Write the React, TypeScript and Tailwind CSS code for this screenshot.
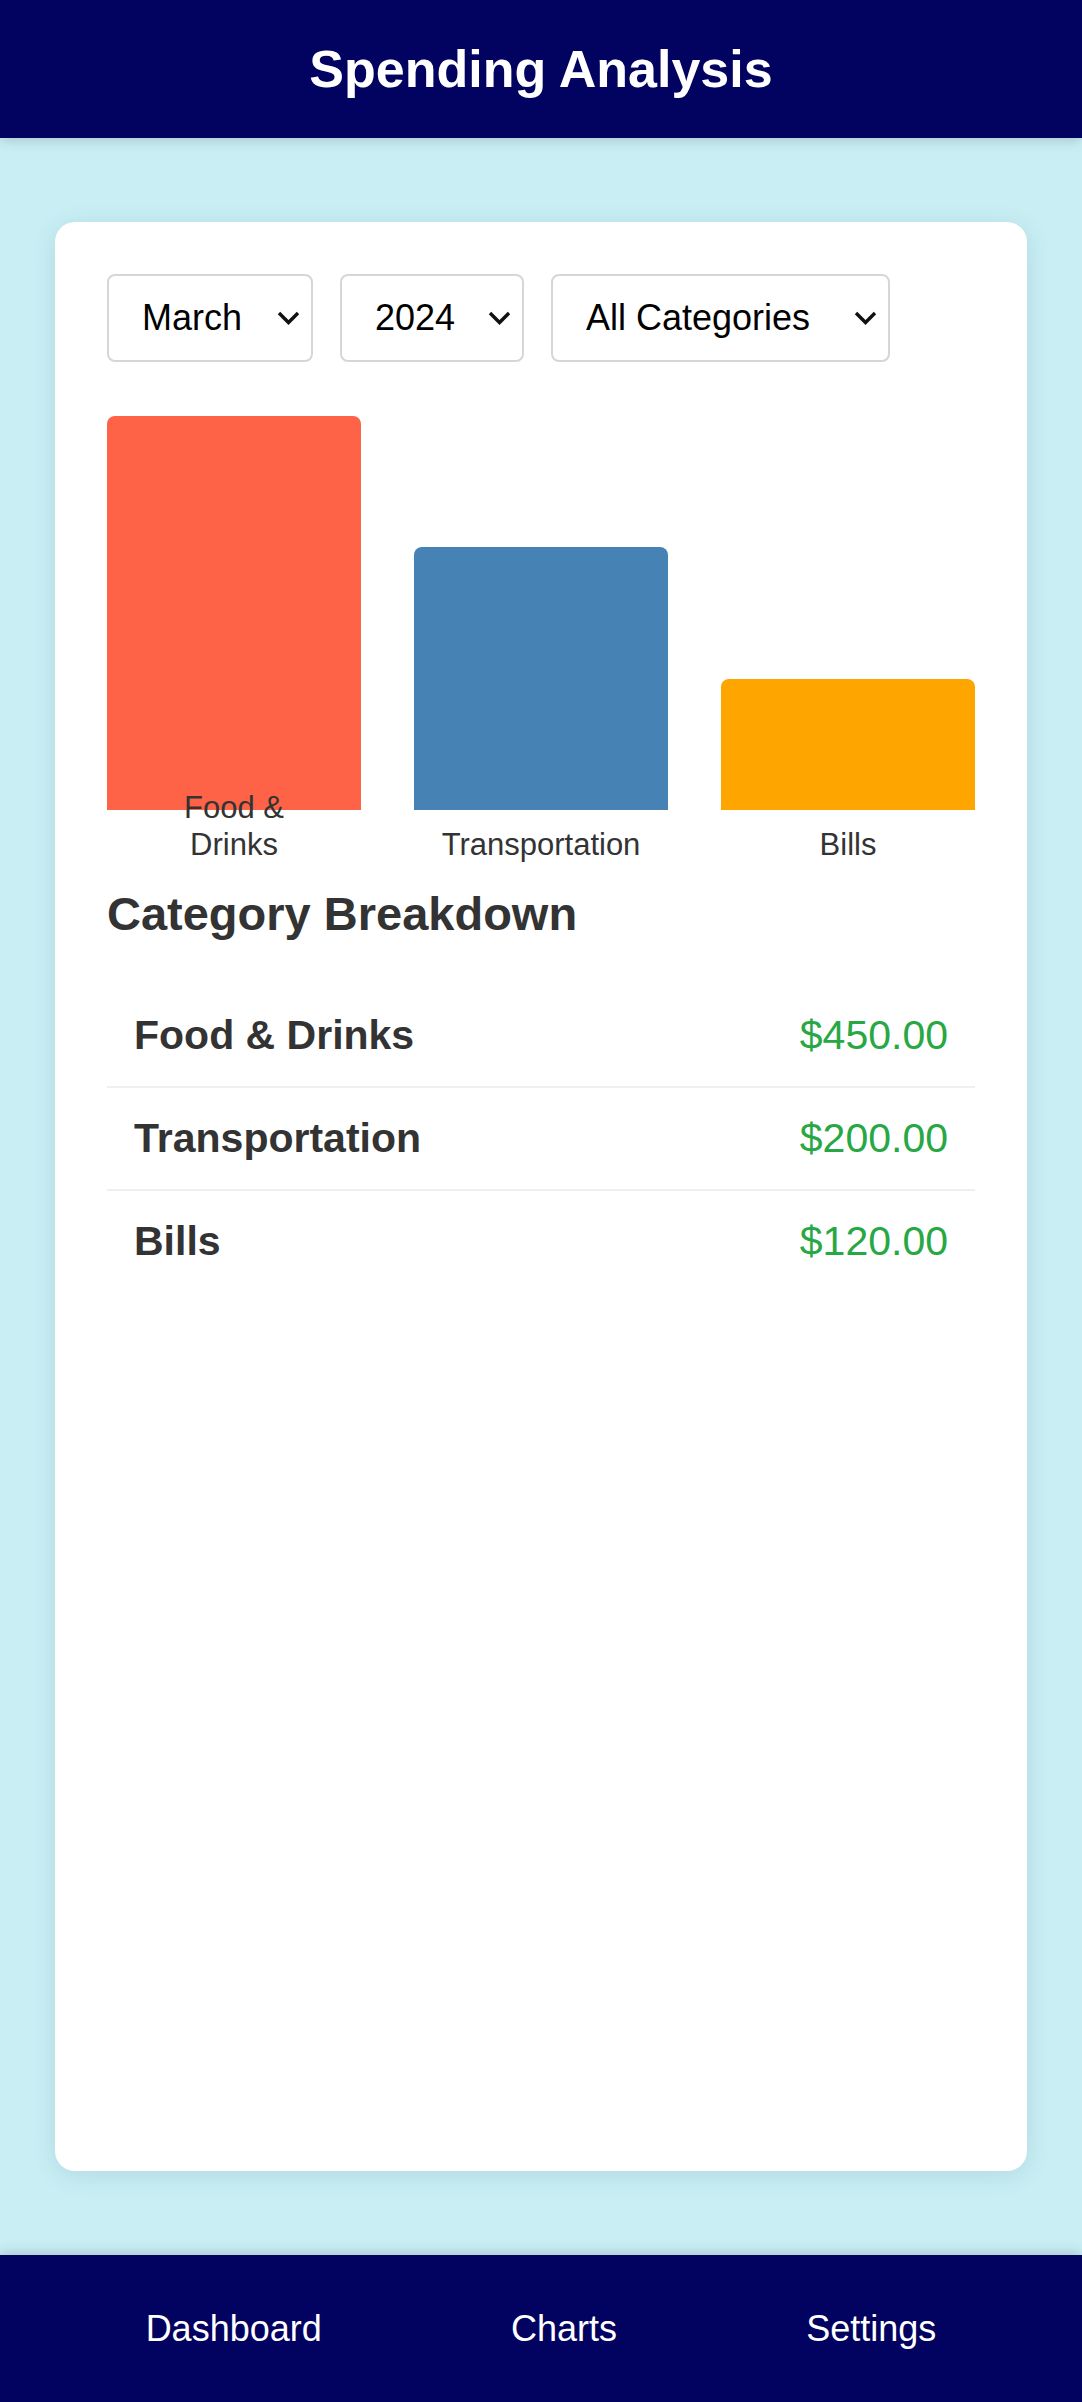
import { useState } from 'react'

const bars = [
  { name: 'Food & Drinks', color: 'bg-[#ff6347]', height: 'h-[394px]' },
  { name: 'Transportation', color: 'bg-[#4682b4]', height: 'h-[263px]' },
  { name: 'Bills', color: 'bg-[#ffa500]', height: 'h-[131px]' },
]

const breakdown = [
  { name: 'Food & Drinks', amount: 450 },
  { name: 'Transportation', amount: 200 },
  { name: 'Bills', amount: 120 },
]

function Chevron() {
  return (
    <svg
      className="pointer-events-none absolute right-[13px] top-1/2 -translate-y-1/2"
      width="23"
      height="15"
      viewBox="0 0 23 15"
      fill="none"
    >
      <path d="M2 2.5 L11.5 12 L21 2.5" stroke="#111" strokeWidth="3.4" strokeLinejoin="miter" />
    </svg>
  )
}

function Filter({
  value,
  options,
  width,
  onChange,
}: {
  value: string
  options: string[]
  width: string
  onChange: (v: string) => void
}) {
  return (
    <div className={`relative ${width}`}>
      <select
        value={value}
        onChange={(e) => onChange(e.target.value)}
        className="h-[88px] w-full appearance-none rounded-[8px] border-2 border-[#d6d6d6] bg-white pl-[33px] text-[36px] text-black outline-none"
      >
        {options.map((o) => (
          <option key={o}>{o}</option>
        ))}
      </select>
      <Chevron />
    </div>
  )
}

export default function App() {
  const [month, setMonth] = useState('March')
  const [year, setYear] = useState('2024')
  const [category, setCategory] = useState('All Categories')

  return (
    <div className="flex min-h-screen flex-col bg-[#c9eff5] font-['Liberation_Sans',Arial,sans-serif]">
      <header className="relative z-10 flex h-[138px] items-center justify-center bg-[#020260] shadow-[0_2px_12px_rgba(0,0,0,0.18)]">
        <h1 className="text-[52px] font-bold leading-none text-white">Spending Analysis</h1>
      </header>

      <main className="flex flex-1 px-[55px] py-[84px]">
        <div className="flex flex-1 flex-col rounded-[20px] bg-white p-[52px] shadow-[0_4px_24px_rgba(0,60,80,0.12)]">
          <div className="flex gap-[27px]">
            <Filter value={month} options={['January', 'February', 'March']} width="w-[206px]" onChange={setMonth} />
            <Filter value={year} options={['2023', '2024']} width="w-[184px]" onChange={setYear} />
            <Filter
              value={category}
              options={['All Categories', 'Food & Drinks', 'Transportation', 'Bills']}
              width="w-[339px]"
              onChange={setCategory}
            />
          </div>

          <div className="mt-[54px] flex h-[394px] items-end gap-[53px]">
            {bars.map((bar) => (
              <div key={bar.name} className="relative flex-1">
                <div className={`${bar.height} ${bar.color} rounded-t-[8px]`} />
                <span className="absolute bottom-[-53px] left-1/2 -translate-x-1/2 text-center text-[31px] leading-[36.5px] text-[#333]">
                  {bar.name}
                </span>
              </div>
            ))}
          </div>

          <h2 className="mt-[77px] text-[47px] font-bold leading-[54px] text-[#333]">Category Breakdown</h2>

          <ul className="mt-[44px]">
            {breakdown.map((item, i) => (
              <li
                key={item.name}
                className={`flex items-center justify-between px-[27px] py-[27px] text-[41px] leading-[47px] ${
                  i < breakdown.length - 1 ? 'border-b-2 border-[#efefef]' : ''
                }`}
              >
                <span className="font-bold text-[#333]">{item.name}</span>
                <span className="text-[#28a745]">${item.amount.toFixed(2)}</span>
              </li>
            ))}
          </ul>
        </div>
      </main>

      <footer className="relative z-10 flex h-[147px] items-center justify-around bg-[#020260] px-[51px] shadow-[0_-2px_12px_rgba(0,0,0,0.18)]">
        <a className="text-[36px] text-white">Dashboard</a>
        <a className="text-[36px] text-white">Charts</a>
        <a className="text-[36px] text-white">Settings</a>
      </footer>
    </div>
  )
}
